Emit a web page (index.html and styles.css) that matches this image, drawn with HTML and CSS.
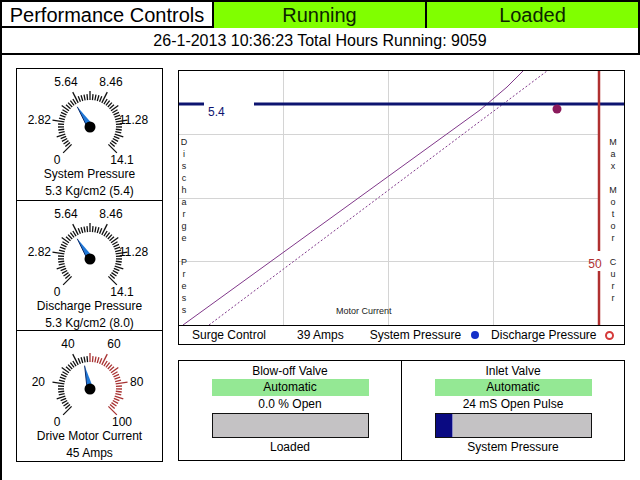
FILE: index.html
```html
<!DOCTYPE html>
<html lang="en">
<head>
  <meta charset="UTF-8">
  <title>Performance Controls</title>
  <link rel="stylesheet" href="styles.css">
</head>
<body>

<div class="screen">
  <div class="title-bar">
    <div class="title-cell">Performance Controls</div>
    <div class="state-cell">Running</div>
    <div class="state-cell">Loaded</div>
  </div>
  <div class="status-line">26-1-2013 10:36:23 Total Hours Running: 9059</div>

  <div class="main">
    <!-- Dials: ticks and needle are drawn by gauges.js -->
    <div class="gauges">
      <div class="gauge" data-min="0" data-max="14.1" data-value="5.3">
        <svg class="dial" width="145" height="97">
          <text x="49" y="17" text-anchor="middle">5.64</text>
          <text x="94" y="17" text-anchor="middle">8.46</text>
          <text x="34" y="55" text-anchor="end">2.82</text>
          <text x="102" y="55">11.28</text>
          <text x="40" y="95" text-anchor="middle">0</text>
          <text x="105" y="95" text-anchor="middle">14.1</text>
        </svg>
        <div class="gauge-name">System Pressure</div>
        <div class="gauge-value">5.3 Kg/cm2 (5.4)</div>
      </div>
      <div class="gauge" data-min="0" data-max="14.1" data-value="5.3">
        <svg class="dial" width="145" height="97">
          <text x="49" y="17" text-anchor="middle">5.64</text>
          <text x="94" y="17" text-anchor="middle">8.46</text>
          <text x="34" y="55" text-anchor="end">2.82</text>
          <text x="102" y="55">11.28</text>
          <text x="40" y="95" text-anchor="middle">0</text>
          <text x="105" y="95" text-anchor="middle">14.1</text>
        </svg>
        <div class="gauge-name">Discharge Pressure</div>
        <div class="gauge-value">5.3 Kg/cm2 (8.0)</div>
      </div>
      <div class="gauge" data-min="0" data-max="100" data-value="45" data-red-from="50">
        <svg class="dial" width="145" height="97">
          <text x="51" y="17" text-anchor="middle">40</text>
          <text x="97" y="17" text-anchor="middle">60</text>
          <text x="28" y="55" text-anchor="end">20</text>
          <text x="113" y="55">80</text>
          <text x="40" y="95" text-anchor="middle">0</text>
          <text x="105" y="95" text-anchor="middle">100</text>
        </svg>
        <div class="gauge-name">Drive Motor Current</div>
        <div class="gauge-value">45 Amps</div>
      </div>
    </div>

    <div class="right-side">
      <div class="chart">
        <svg class="plot" width="445" height="254">
          <g class="grid">
            <line x1="104.5" y1="0" x2="104.5" y2="254"/>
            <line x1="209.5" y1="0" x2="209.5" y2="254"/>
            <line x1="314.5" y1="0" x2="314.5" y2="254"/>
            <line x1="0" y1="63.5" x2="420" y2="63.5"/>
            <line x1="0" y1="127.5" x2="420" y2="127.5"/>
            <line x1="0" y1="190.5" x2="420" y2="190.5"/>
          </g>

          <!-- surge curve and its control margin -->
          <polyline class="surge" points="4,254 301,39 328,16 344,0"/>
          <polyline class="surge margin" points="30,254 368,0"/>

          <!-- pressure set point -->
          <line class="setpoint" x1="0" y1="33" x2="25" y2="33"/>
          <line class="setpoint" x1="75" y1="33" x2="445" y2="33"/>
          <text class="setpoint-label" x="29" y="45">5.4</text>

          <!-- motor current limit -->
          <line class="limit" x1="420" y1="0" x2="420" y2="180"/>
          <line class="limit" x1="420" y1="200" x2="420" y2="254"/>
          <text class="limit-label" x="416" y="197" text-anchor="middle">50</text>

          <circle class="operating-point" cx="378" cy="38" r="4.5"/>

          <text class="axis-label" x="5" y="74" text-anchor="middle">
            <tspan x="5">D</tspan><tspan x="5" dy="12">i</tspan><tspan x="5" dy="12">s</tspan><tspan x="5" dy="12">c</tspan><tspan x="5" dy="12">h</tspan><tspan x="5" dy="12">a</tspan><tspan x="5" dy="12">r</tspan><tspan x="5" dy="12">g</tspan><tspan x="5" dy="12">e</tspan><tspan x="5" dy="24">P</tspan><tspan x="5" dy="12">r</tspan><tspan x="5" dy="12">e</tspan><tspan x="5" dy="12">s</tspan><tspan x="5" dy="12">s</tspan>
          </text>
          <text class="axis-label" x="434" y="74" text-anchor="middle">
            <tspan x="434">M</tspan><tspan x="434" dy="12">a</tspan><tspan x="434" dy="12">x</tspan><tspan x="434" dy="24">M</tspan><tspan x="434" dy="12">o</tspan><tspan x="434" dy="12">t</tspan><tspan x="434" dy="12">o</tspan><tspan x="434" dy="12">r</tspan><tspan x="434" dy="24">C</tspan><tspan x="434" dy="12">u</tspan><tspan x="434" dy="12">r</tspan><tspan x="434" dy="12">r</tspan>
          </text>
          <text class="axis-label" x="157" y="243">Motor Current</text>
        </svg>

        <div class="legend">
          <span>Surge Control</span>
          <span class="amps">39 Amps</span>
          <span class="sys">System Pressure</span>
          <span class="dot"></span>
          <span class="dis">Discharge Pressure</span>
          <span class="ring"></span>
        </div>
      </div>

      <div class="valves">
        <div class="valve">
          <div class="valve-name">Blow-off Valve</div>
          <div class="valve-mode">Automatic</div>
          <div class="valve-reading">0.0 % Open</div>
          <div class="valve-bar"><div class="valve-fill" style="width: 0%"></div></div>
          <div class="valve-caption">Loaded</div>
        </div>
        <div class="valve">
          <div class="valve-name">Inlet Valve</div>
          <div class="valve-mode">Automatic</div>
          <div class="valve-reading">24 mS Open Pulse</div>
          <div class="valve-bar"><div class="valve-fill" style="width: 11%"></div></div>
          <div class="valve-caption">System Pressure</div>
        </div>
      </div>
    </div>
  </div>
</div>

<script src="gauges.js"></script>
</body>
</html>
```

FILE: styles.css
```css
body {
  margin: 0;
  background: #fff;
  font-family: "Liberation Sans", Arial, sans-serif;
  color: #000;
}

.screen {
  width: 640px;
  height: 480px;
  box-sizing: border-box;
  border-left: 2px solid #000;
  overflow: hidden;
}

/* Top status rows */
.title-bar {
  display: grid;
  grid-template-columns: 212px 213px 1fr;
  height: 28px;
  box-sizing: border-box;
  border-top: 2px solid #000;
  border-right: 2px solid #000;
  border-bottom: 2px solid #000;
  font-size: 20px;
  line-height: 26px;
  text-align: center;
}

.title-cell {
  border-right: 2px solid #000;
}

.state-cell {
  background-color: #80ff00;
  color: #0c2600;
}

.state-cell:nth-child(2) {
  border-right: 2px solid #000;
}

.status-line {
  height: 27px;
  box-sizing: border-box;
  border-right: 2px solid #000;
  border-bottom: 2px solid #000;
  font-size: 16px;
  line-height: 25px;
  text-align: center;
}

.main {
  display: flex;
  gap: 15px;
  padding: 13px 0 0 14px;
}

/* Dials */
.gauges {
  width: 147px;
  box-sizing: border-box;
  border: 1px solid #000;
}

.gauge {
  height: 131px;
  border-bottom: 1px solid #000;
  text-align: center;
  font-size: 12px;
}

.gauge:nth-child(2) {
  height: 129px;
}

.gauge:last-child {
  height: 130px;
  border-bottom: none;
}

.dial {
  display: block;
}

.dial text {
  font-family: "Liberation Sans", Arial, sans-serif;
  font-size: 12px;
  fill: #000;
}

.gauge-name,
.gauge-value {
  line-height: 17px;
}

/* Surge chart */
.right-side {
  margin-top: 2px;
  width: 447px;
}

.chart {
  border: 1px solid #000;
}

.plot {
  display: block;
}

.grid line {
  stroke: #d4d4d4;
  stroke-width: 1;
}

.surge {
  fill: none;
  stroke: #80388a;
  stroke-width: 1;
}

.surge.margin {
  stroke-dasharray: 2 2;
}

.setpoint {
  stroke: #0d1470;
  stroke-width: 3;
}

.setpoint-label {
  font-size: 12px;
  fill: #0d1470;
}

.limit {
  stroke: #b03030;
  stroke-width: 2.5;
}

.limit-label {
  font-size: 12px;
  fill: #b03030;
}

.operating-point {
  fill: #8b1a5c;
}

.axis-label {
  font-size: 9px;
  fill: #222;
}

.legend {
  display: flex;
  align-items: center;
  height: 18px;
  border-top: 1px solid #000;
  padding-left: 13px;
  font-size: 12px;
}

.legend .amps {
  margin-left: 31px;
}

.legend .sys {
  margin-left: 26px;
}

.legend .dot {
  width: 8px;
  height: 8px;
  margin-left: 10px;
  border-radius: 50%;
  background-color: #1530c8;
}

.legend .dis {
  margin-left: 12px;
}

.legend .ring {
  width: 5px;
  height: 5px;
  margin-left: 9px;
  border: 2px solid #d53a3a;
  border-radius: 50%;
}

/* Valve panels */
.valves {
  display: grid;
  grid-template-columns: 223px 1fr;
  height: 101px;
  margin-top: 15px;
  box-sizing: border-box;
  border: 1px solid #000;
  font-size: 12px;
  text-align: center;
}

.valve {
  padding-top: 2px;
}

.valve:first-child {
  border-right: 1px solid #000;
}

.valve-name {
  line-height: 16px;
}

.valve-mode {
  width: 157px;
  margin: 0 auto;
  line-height: 17px;
  background-color: #94e894;
}

.valve-reading {
  line-height: 17px;
}

.valve-bar {
  width: 157px;
  height: 25px;
  margin: 0 auto;
  box-sizing: border-box;
  border: 1px solid #111;
  background-color: #c4c2c4;
}

.valve-fill {
  height: 100%;
  background-color: #0a0a82;
  border-right: 1px solid #8a8ac8;
  box-sizing: border-box;
}

.valve-fill[style="width: 0%"] {
  border-right: none;
}

.valve-caption {
  line-height: 18px;
}
```

FILE: gauges.js
```js
// Draw the tick ring and needle of every dial from its data- attributes
const SVG_NS = 'http://www.w3.org/2000/svg';

function addShape(parent, tag, attrs) {
  const el = document.createElementNS(SVG_NS, tag);
  for (const name in attrs) {
    el.setAttribute(name, attrs[name]);
  }
  parent.appendChild(el);
  return el;
}

document.querySelectorAll('.gauge').forEach(gauge => {
  const svg = gauge.querySelector('.dial');
  const min = parseFloat(gauge.dataset.min);
  const max = parseFloat(gauge.dataset.max);
  const value = parseFloat(gauge.dataset.value);
  const redFrom = gauge.dataset.redFrom ? parseFloat(gauge.dataset.redFrom) : null;

  const cx = 73;
  const cy = 57;
  const steps = 50;

  // 270 degree sweep, zero at lower left
  for (let i = 0; i <= steps; i++) {
    const a = (-135 + i * 270 / steps) * Math.PI / 180;
    let outer = 32;
    if (i % 10 === 0) outer = 38;
    else if (i % 5 === 0) outer = 35;
    const inner = 26;
    const v = min + (max - min) * i / steps;
    const colour = redFrom !== null && v >= redFrom ? '#a83232' : '#111';

    addShape(svg, 'line', {
      x1: cx + inner * Math.sin(a),
      y1: cy - inner * Math.cos(a),
      x2: cx + outer * Math.sin(a),
      y2: cy - outer * Math.cos(a),
      stroke: colour,
      'stroke-width': 1.3
    });
  }

  // Needle
  const a = (-135 + (value - min) / (max - min) * 270) * Math.PI / 180;
  const len = 23;
  const half = 3;
  const tipX = cx + len * Math.sin(a);
  const tipY = cy - len * Math.cos(a);
  const points = [
    [tipX, tipY],
    [cx - half * Math.cos(a), cy - half * Math.sin(a)],
    [cx + half * Math.cos(a), cy + half * Math.sin(a)]
  ].map(p => p.join(',')).join(' ');

  addShape(svg, 'polygon', { points: points, fill: '#1f78d8' });
  addShape(svg, 'line', {
    x1: tipX, y1: tipY,
    x2: cx - half * Math.cos(a), y2: cy - half * Math.sin(a),
    stroke: '#0a2a6a',
    'stroke-width': 1
  });
  addShape(svg, 'circle', { cx: cx, cy: cy + 1, r: 5.5, fill: '#000' });
});
```
